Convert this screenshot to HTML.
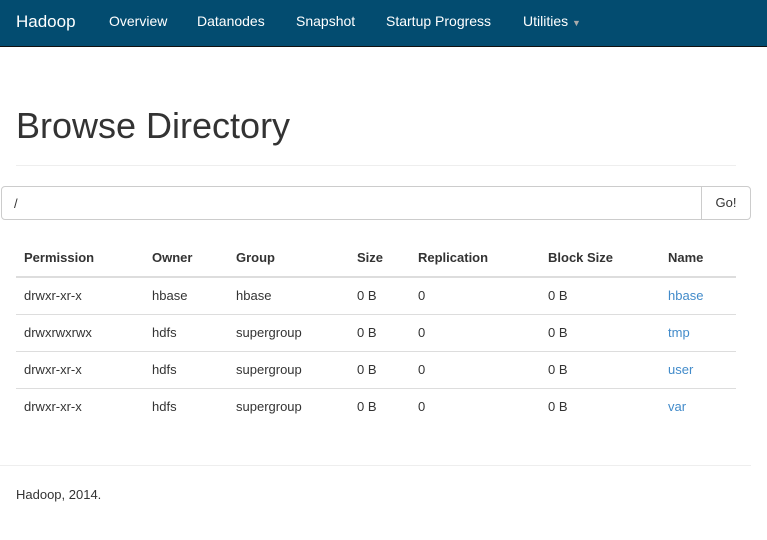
<!DOCTYPE html><html><head><style>
body{margin:0;font-family:"Liberation Sans",sans-serif;font-size:13px;color:#333;background:#fff;width:767px;height:540px;overflow:hidden;position:relative}
.nav{position:absolute;left:0;top:0;width:767px;height:46px;background:#034c70;border-bottom:1px solid #111}
.nav span{position:absolute;top:13px;color:#fff;font-size:14px}
h1{position:absolute;left:16px;top:106px;margin:0;font-size:36px;font-weight:normal;line-height:40px}
.hr{position:absolute;height:1px;background:#eee}
.inp{position:absolute;left:1px;top:186px;width:700px;height:32px;border:1px solid #ccc;border-radius:4px 0 0 4px;box-sizing:border-box;width:701px;height:34px}
.inp span{position:absolute;left:12px;top:9px}
.go{position:absolute;left:701px;top:186px;width:50px;height:34px;border:1px solid #ccc;border-radius:0 4px 4px 0;box-sizing:border-box;text-align:center;line-height:32px;font-size:13px}
table{position:absolute;left:16px;top:240px;width:720px;border-collapse:collapse}
th{text-align:left;font-weight:bold;padding:8px;height:20px;border-bottom:2px solid #ddd;line-height:18px}
td{padding:8px;height:20px;border-bottom:1px solid #ddd;line-height:20px}
tr:last-child td{border-bottom:none}
a{color:#428bca;text-decoration:none}
</style></head><body>
<div class="nav"><span style="left:16px;top:12px;font-size:17px">Hadoop</span><span style="left:109px">Overview</span><span style="left:197px">Datanodes</span><span style="left:296px">Snapshot</span><span style="left:386px">Startup Progress</span><span style="left:523px">Utilities <span style="position:static;font-size:9px;color:#aaa">▼</span></span></div>
<h1>Browse Directory</h1>
<div class="hr" style="left:16px;top:165px;width:720px"></div>
<div class="inp"><span>/</span></div><div class="go">Go!</div>
<table>
<tr><th style="width:112px">Permission</th><th style="width:68px">Owner</th><th style="width:105px">Group</th><th style="width:45px">Size</th><th style="width:114px">Replication</th><th style="width:104px">Block Size</th><th>Name</th></tr>
<tr><td>drwxr-xr-x</td><td>hbase</td><td>hbase</td><td>0 B</td><td>0</td><td>0 B</td><td><a>hbase</a></td></tr>
<tr><td>drwxrwxrwx</td><td>hdfs</td><td>supergroup</td><td>0 B</td><td>0</td><td>0 B</td><td><a>tmp</a></td></tr>
<tr><td>drwxr-xr-x</td><td>hdfs</td><td>supergroup</td><td>0 B</td><td>0</td><td>0 B</td><td><a>user</a></td></tr>
<tr><td>drwxr-xr-x</td><td>hdfs</td><td>supergroup</td><td>0 B</td><td>0</td><td>0 B</td><td><a>var</a></td></tr>
</table>
<div class="hr" style="left:0;top:465px;width:751px"></div>
<div style="position:absolute;left:16px;top:487px">Hadoop, 2014.</div>
</body></html>
